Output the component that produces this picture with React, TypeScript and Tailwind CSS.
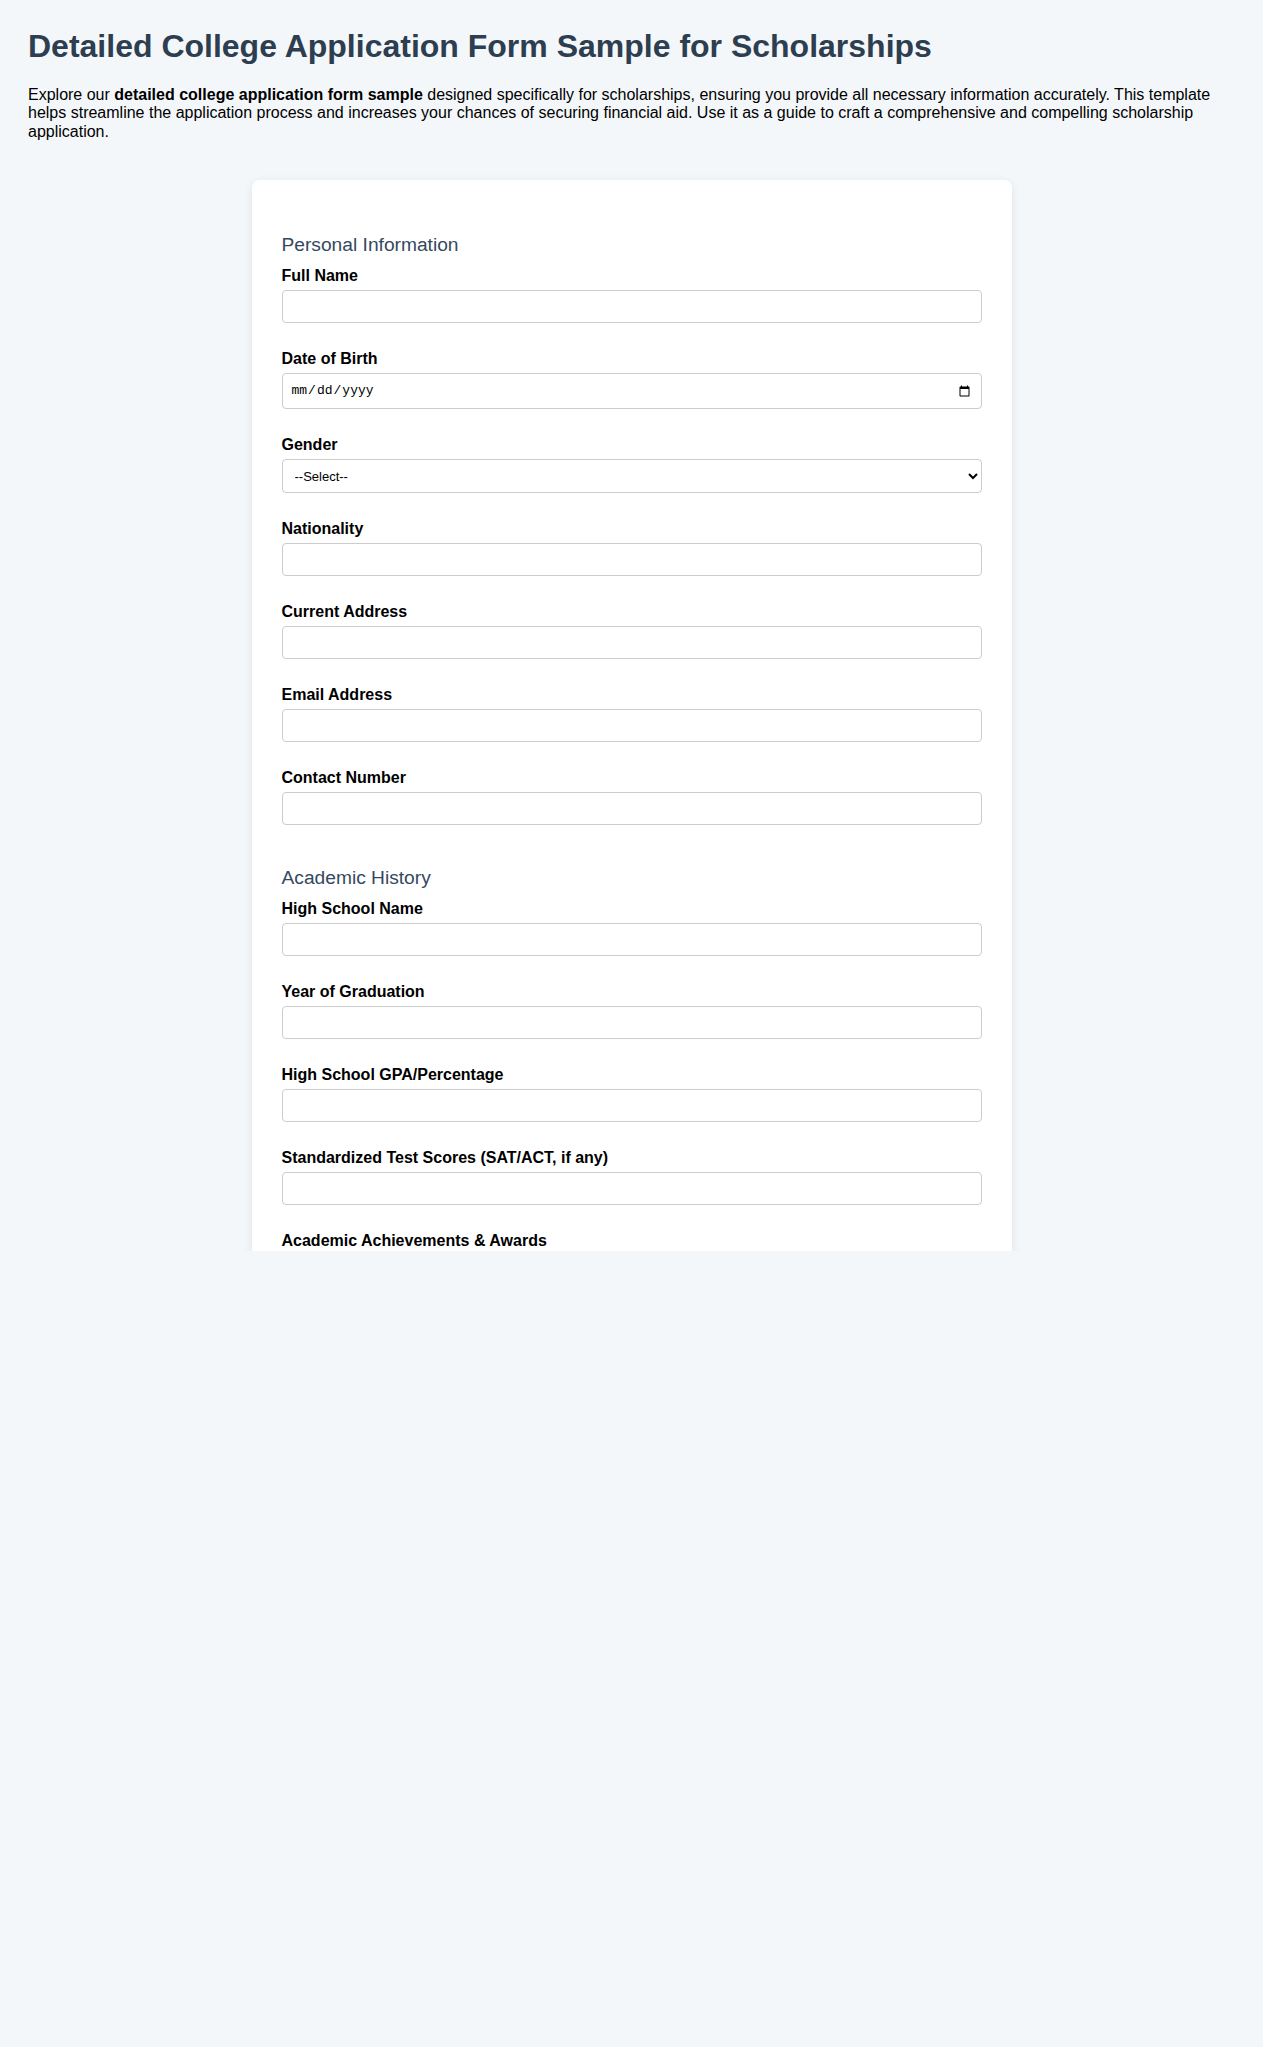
import React from 'react';

const Field: React.FC<{ label: string; type?: string }> = ({ label, type = 'text' }) => {
    return (
        <div className="mb-[27px]">
            <label className="block text-[16px] leading-[18px] font-bold text-black mb-[5px]">{label}</label>
            {type === 'date' ? (
                <input
                    type="date"
                    className="block w-full h-[36px] border border-[#cccccc] rounded-[4px] px-[8px] text-[13px] bg-white text-black"
                    style={{ fontFamily: '"Liberation Mono", monospace' }}
                />
            ) : (
                <input
                    type={type}
                    className="block w-full h-[33px] border border-[#cccccc] rounded-[4px] px-[8px] text-[13px] bg-white"
                />
            )}
        </div>
    );
};

const App: React.FC = () => {
    return (
        <div className="min-h-screen bg-[#f4f7fa] text-black" style={{ fontFamily: '"Liberation Sans", Arial, sans-serif' }}>
            <div className="h-[1251px] overflow-hidden px-[28px] pt-[28px]">
                <h1 className="text-[32px] leading-[37px] font-bold text-[#2c3e50]">
                    Detailed College Application Form Sample for Scholarships
                </h1>
                <p className="mt-[21px] text-[16px] leading-[18.4px]">
                    Explore our <strong>detailed college application form sample</strong> designed specifically for scholarships, ensuring you provide all necessary information accurately. This template helps streamline the application process and increases your chances of securing financial aid. Use it as a guide to craft a comprehensive and compelling scholarship application.
                </p>
                <div className="mx-auto mt-[39px] w-[760px] bg-white rounded-[8px] shadow-[0_2px_10px_rgba(0,0,0,0.08)] px-[30px] pt-[54px] pb-[30px]">
                    <form>
                        <section>
                            <h2 className="text-[19.2px] leading-[22px] text-[#34495e] mb-[11px]">Personal Information</h2>
                            <Field label="Full Name" />
                            <Field label="Date of Birth" type="date" />
                            <div className="mb-[27px]">
                                <label className="block text-[16px] leading-[18px] font-bold mb-[5px]">Gender</label>
                                <select className="block w-full h-[34px] border border-[#cccccc] rounded-[4px] px-[8px] text-[13px] bg-white">
                                    <option>--Select--</option>
                                    <option>Male</option>
                                    <option>Female</option>
                                    <option>Other</option>
                                </select>
                            </div>
                            <Field label="Nationality" />
                            <Field label="Current Address" />
                            <Field label="Email Address" type="email" />
                            <Field label="Contact Number" type="tel" />
                        </section>
                        <section className="pt-[15px]">
                            <h2 className="text-[19.2px] leading-[22px] text-[#34495e] mb-[11px]">Academic History</h2>
                            <Field label="High School Name" />
                            <Field label="Year of Graduation" />
                            <Field label="High School GPA/Percentage" />
                            <Field label="Standardized Test Scores (SAT/ACT, if any)" />
                            <div className="mb-[27px]">
                                <label className="block text-[16px] leading-[18px] font-bold mb-[5px]">Academic Achievements &amp; Awards</label>
                                <textarea className="block w-full h-[80px] border border-[#cccccc] rounded-[4px] px-[8px] text-[13px]" />
                            </div>
                        </section>
                    </form>
                </div>
            </div>
        </div>
    );
};

export default App;
